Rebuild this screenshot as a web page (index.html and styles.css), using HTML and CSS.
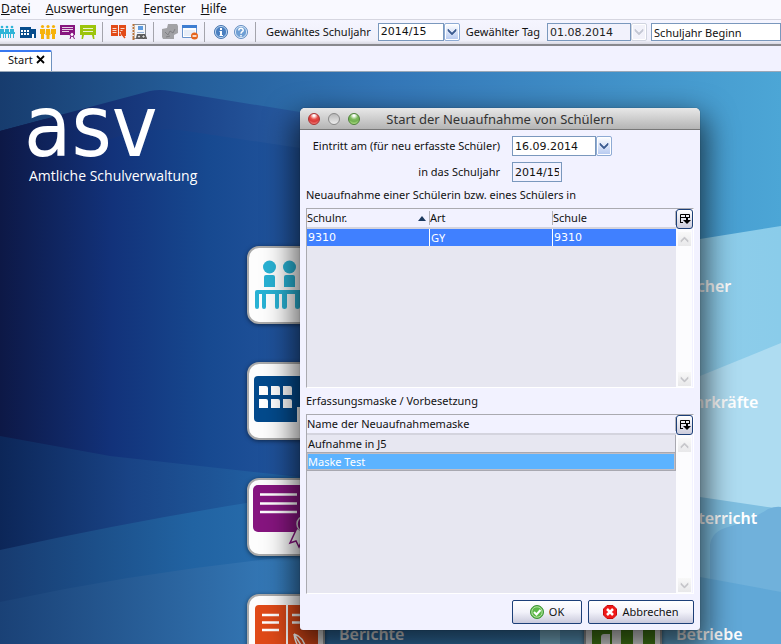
FILE: index.html
```html
<!DOCTYPE html>
<html lang="de">
<head>
<meta charset="utf-8">
<title>ASV</title>
<link rel="stylesheet" href="styles.css">
</head>
<body>
<svg class="defs" aria-hidden="true">
  <symbol id="chevron" viewBox="0 0 10 8"><path d="M1 1l4 4 4-4v2L5 7 1 3z" fill="currentColor" stroke="currentColor" stroke-width=".6"/></symbol>
  <symbol id="columns" viewBox="0 0 12 12"><path d="M1.500 10V1.500h9V5M1 4.500h10M6.500 1v4M1 9.500h3" fill="none" stroke="#000"/><path d="M7 5h2v2h3l-4 4-4-4h3z"/></symbol>
</svg>

<nav class="menubar">
  <a href="#"><u>D</u>atei</a><a href="#"><u>A</u>uswertungen</a><a href="#"><u>F</u>enster</a><a href="#"><u>H</u>ilfe</a>
</nav>

<div class="toolbar">
  <button class="tool" aria-label="Schüler"><svg viewBox="0 0 16 16"><g fill="#2fb4d8"><circle cx="2" cy="3" r="1.300"/><circle cx="7" cy="3" r="1.300"/><circle cx="12" cy="3" r="1.300"/><path d="M0 5h4v3H0zM5 5h4v3H5zM10 5h4v3h-4zM0 8h15v2H0zM0 10h1v4H0zM3 10h1v4H3zM5 10h1v4H5zM8 10h1v4H8zM10 10h1v4h-1zM13 10h1v4h-1z"/></g></svg></button>
  <button class="tool" aria-label="Klassen"><svg viewBox="0 0 16 16"><path d="M0 3h11v2h5v9H0z" fill="#064b8c"/><path d="M1 6h2v2H1zM4 6h2v2H4zM7 6h2v2H7zM1 9h2v2H1zM4 9h2v2H4zM7 9h2v2H7zM12 10h2v4h-2z" fill="#fff"/></svg></button>
  <button class="tool" aria-label="Lehrer"><svg viewBox="0 0 16 16"><g fill="#f6b20a"><circle cx="2.500" cy="2.500" r="1.600"/><circle cx="8" cy="2.500" r="1.600"/><circle cx="13.500" cy="2.500" r="1.600"/><path d="M0 5h5v5H4v5H1v-5H0zM6 5h4l.5 6H9.500v4h-3v-4h-1zM11 5h5v5h-1v5h-3v-5h-1z"/></g></svg></button>
  <button class="tool" aria-label="Zeugnisse"><svg viewBox="0 0 16 16"><path d="M0 1h15v10H0z" fill="#86157f"/><path d="M2 3.500h11M2 5.500h11M2 7.500h7" stroke="#fff" stroke-width=".8"/><circle cx="12" cy="10.500" r="2" fill="#fff" stroke="#86157f"/><path d="M11 12l-1 3M13 12l1.500 3" stroke="#86157f"/></svg></button>
  <button class="tool" aria-label="Unterricht"><svg viewBox="0 0 16 16"><path d="M0 1h16v10H0zM2 11h2l-1 4H1.500zM12 11h2l.5 4H13z" fill="#9cc40c"/><path d="M3 4.500h10M3 7.500h10" stroke="#fff" stroke-width=".8"/></svg></button>
  <span class="separator"></span>
  <button class="tool" aria-label="Berichte"><svg viewBox="0 0 16 16"><path d="M0 1h7v11H0zM8 1h7v11H8z" fill="#e24a18"/><path d="M1.500 4.500h4M1.500 6.500h4M1.500 8.500h4M9.500 4.500h4M9.500 6.500h2" stroke="#fff" stroke-width=".8"/><path d="M9 8l2 4 3 2" fill="none" stroke="#fff"/><path d="M10 9l4 5" stroke="#e24a18" stroke-width="1.500"/></svg></button>
  <button class="tool" aria-label="Adressbuch"><svg viewBox="0 0 16 16"><path d="M2.500.5h12v14h-12z" fill="#f4f7fb" stroke="#8a8f98"/><path d="M2.500 0v16" stroke="#b8743a" stroke-width="2"/><path d="M0 2.500h3M0 5.500h3M0 8.500h3M0 11.500h3" stroke="#e4e4e8"/><path d="M7 2h5v4H7z" fill="#5d9be0"/><path d="M6 8.500h7" stroke="#9ab4d8"/><path d="M5 14l1-4h8l2 4v1H5z" fill="#666"/><circle cx="8" cy="12.500" r="1.600" fill="#ddd" stroke="#333" stroke-width=".8"/><circle cx="12.500" cy="12.500" r="1.600" fill="#ddd" stroke="#333" stroke-width=".8"/></svg></button>
  <span class="separator"></span>
  <button class="tool" aria-label="Dokumente" disabled><svg viewBox="0 0 16 16"><path d="M6 0h9l1 2v7l-4 2v4H1l-1-2V5l5-1z" fill="#a2a2a6"/><path d="M3 8l3 3 2-4 3 2 2-4M4 13l4-1" fill="none" stroke="#808084"/></svg></button>
  <button class="tool" aria-label="Fenster schließen"><svg viewBox="0 0 16 16"><path d="M.5 1.500h14v12H.5z" fill="#fff" stroke="#6a94cc"/><path d="M0 1h15v3H0z" fill="#3f7ed2"/><path d="M2 6h11v6H2z" fill="#e8eef8"/><circle cx="12.500" cy="12" r="3.500" fill="#e5641c"/><path d="M10.500 12h4" stroke="#fff" stroke-width="1.500"/></svg></button>
  <span class="separator"></span>
  <button class="tool" aria-label="Info"><svg viewBox="0 0 16 16"><circle cx="8" cy="8" r="6.500" fill="#4a7fc0" stroke="#4a78b0"/><circle cx="8" cy="8" r="5.600" fill="none" stroke="#b5d0ee"/><path d="M7 4h2v2H7zM6.500 7H9v4h1v1H6.500v-1H7V8h-.5z" fill="#fff"/></svg></button>
  <button class="tool" aria-label="Hilfe"><svg viewBox="0 0 16 16"><circle cx="8" cy="8" r="6.500" fill="#6f9fd4" stroke="#6a92c4"/><circle cx="8" cy="8" r="5.600" fill="none" stroke="#d4e4f6"/><path d="M5.800 6.500c0-3 4.600-2.800 4.400-.2C10 7.800 8 7.700 8 9.800M8 11v1.600" fill="none" stroke="#fff" stroke-width="1.500"/></svg></button>
  <span class="separator"></span>
  <label class="toolbar-label" for="year">Gewähltes Schuljahr</label>
  <div class="combo combo-year">
    <select id="year" class="num"><option>2014/15</option></select>
    <span class="drop"><svg><use href="#chevron"/></svg></span>
  </div>
  <label class="toolbar-label" for="day">Gewählter Tag</label>
  <div class="combo combo-date">
    <input id="day" class="num" type="text" value="01.08.2014" disabled>
    <button class="drop" aria-label="Kalender" disabled><svg><use href="#chevron"/></svg></button>
  </div>
  <input class="day-name" type="text" value="Schuljahr Beginn" aria-label="Bezeichnung des Tages">
</div>

<div class="tabs"><div class="tab"><span>Start</span><button aria-label="Schließen"><svg viewBox="0 0 9 9"><path d="M1 1l7 7M8 1L1 8" stroke="#000" stroke-width="1.800"/></svg></button></div></div>

<main class="desktop">
  <svg class="backdrop" viewBox="0 0 781 572" preserveAspectRatio="xMinYMin slice" aria-hidden="true">
    <defs>
      <linearGradient id="sky"><stop offset="0" stop-color="#173c6e"/><stop offset=".25" stop-color="#255f9b"/><stop offset=".5" stop-color="#3477b8"/><stop offset="1" stop-color="#4ca6d6"/></linearGradient>
      <linearGradient id="hill" gradientUnits="userSpaceOnUse" x1="0" y1="0" x2="320" y2="0"><stop offset="0" stop-color="#0e1745"/><stop offset=".3" stop-color="#142f72"/><stop offset=".6" stop-color="#1b448a"/><stop offset="1" stop-color="#2b60a6"/></linearGradient>
      <linearGradient id="front" gradientUnits="userSpaceOnUse" x1="0" y1="0" x2="320" y2="0"><stop offset="0" stop-color="#0d1846"/><stop offset=".35" stop-color="#12327a"/><stop offset=".65" stop-color="#174990"/><stop offset="1" stop-color="#2457a0"/></linearGradient>
      <linearGradient id="low1" gradientUnits="userSpaceOnUse" x1="0" y1="0" x2="320" y2="0"><stop offset="0" stop-color="#0c2658"/><stop offset=".4" stop-color="#194385"/><stop offset="1" stop-color="#246bad"/></linearGradient>
      <linearGradient id="low2" gradientUnits="userSpaceOnUse" x1="0" y1="0" x2="320" y2="0"><stop offset="0" stop-color="#173b70"/><stop offset=".6" stop-color="#2163a2"/><stop offset="1" stop-color="#2c72b3"/></linearGradient>
      <linearGradient id="low3" gradientUnits="userSpaceOnUse" x1="0" y1="0" x2="781" y2="0"><stop offset="0" stop-color="#1a4176"/><stop offset=".35" stop-color="#3478b6"/><stop offset="1" stop-color="#438fc6"/></linearGradient>
      <linearGradient id="ice" gradientUnits="userSpaceOnUse" x1="690" y1="0" x2="781" y2="0"><stop offset="0" stop-color="#8fcdea"/><stop offset="1" stop-color="#8accea"/></linearGradient>
    </defs>
    <path fill="url(#sky)" d="M0 0h781v572H0z"/>
    <path fill="url(#hill)" d="M0 59L60 43 150 19q10-2 20 0L300 40l130 30v502H0z"/>
    <path fill="url(#front)" d="M0 59l45-12 60 22q35-14 75-11l120 18 130 22v474H0z"/>
    <path fill="url(#low1)" d="M0 364l110 20 190 21 100 10v157H0z"/>
    <path fill="url(#low2)" d="M0 478q160-35 300-55l160-16v165H0z"/>
    <path fill="url(#low3)" d="M0 530q150-32 300-46l400-24v112H0z"/>
    <path fill="url(#ice)" d="M540 190l160-23 81-13v418H540z"/>
    <path fill="#aedcf1" d="M560 370l140-66 81-33v166l-221-25z"/>
    <path fill="#7fbfe1" d="M560 406l140 19 81 12v135H560z"/>
    <path fill="#70b1db" d="M710 572V473q2-14 18-18 22-6 40-18 8-3 13-2v137z"/>
    <path fill="#51a0d3" opacity=".5" d="M560 495l140 10 81 15v52H560z"/>
  </svg>

  <div class="welcome">
    <header class="brand"><div class="logo">asv</div><p>Amtliche Schulverwaltung</p></header>
    <div class="tiles">
      <a class="tile" href="#" aria-label="Schüler"><svg viewBox="0 0 78 78"><rect class="card" x="1" y="1" width="76" height="76" rx="11"/><g fill="#29b2d4"><circle cx="22.500" cy="21" r="6.500"/><circle cx="42.500" cy="21" r="6.500"/><path d="M17 41V31q0-2 2-2h7q2 0 2 2v10zM37 41V31q0-2 2-2h7q2 0 2 2v10zM8 46q0-2 2-2h60v4H12v13q0 2-2 2t-2-2zM15 47h4v14q0 2-2 2t-2-2zM28 47h4v14q0 2-2 2t-2-2zM35 47h5v14q0 2-2.500 2T35 61zM48 47h5v14q0 2-2.500 2T48 61z"/></g></svg></a>
      <a class="tile" href="#"><svg viewBox="0 0 78 78"><rect class="card" x="1" y="1" width="76" height="76" rx="11"/></svg><span>Bücher</span></a>
      <a class="tile" href="#" aria-label="Klassen"><svg viewBox="0 0 78 78"><rect class="card" x="1" y="1" width="76" height="76" rx="11"/><rect x="7" y="14" width="64" height="46" rx="4" fill="#034a8c"/><path fill="#fff" d="M12 24h7q2 0 2 2v7h-9zM24 24h7q2 0 2 2v7h-9zM36 24h7q2 0 2 2v7h-9zM12 37h7q2 0 2 2v7h-9zM24 37h7q2 0 2 2v7h-9zM36 37h7q2 0 2 2v7h-9zM50 45h16v16H50z"/></svg></a>
      <a class="tile" href="#"><svg viewBox="0 0 78 78"><rect class="card" x="1" y="1" width="76" height="76" rx="11"/></svg><span>Lehrkräfte</span></a>
      <a class="tile" href="#" aria-label="Zeugnisse"><svg viewBox="0 0 78 78"><rect class="card" x="1" y="1" width="76" height="76" rx="11"/><rect x="6" y="7" width="66" height="47" rx="5" fill="#86157f"/><path d="M13 16.500h37M13 25.500h37M13 34h37" stroke="#fff" stroke-width="2.500"/><path d="M50 50l-7 15 6-2 3 6 6-14z" fill="#fff" stroke="#86157f" stroke-width="1.500"/><circle cx="58" cy="46" r="8" fill="#86157f" stroke="#ddd" stroke-width="1.500"/></svg></a>
      <a class="tile" href="#"><svg viewBox="0 0 78 78"><rect class="card" x="1" y="1" width="76" height="76" rx="11"/></svg><span>Unterricht</span></a>
      <a class="tile" href="#"><svg viewBox="0 0 78 78"><rect class="card" x="1" y="1" width="76" height="76" rx="11"/><path d="M12 11h27v52H8V15q0-4 4-4zM41 11h26q4 0 4 4v48H41z" fill="#e04a18"/><path d="M15 21h17M15 28.500h17M15 36h17M45 21h17M45 28.500h17" stroke="#fff" stroke-width="2.500"/><path d="M47 40q2 14 11 19l4 6M47 40q11 3 12 18M47 40l12 19" fill="none" stroke="#fff" stroke-width="1.500"/></svg><span>Berichte</span></a>
      <a class="tile" href="#"><svg viewBox="0 0 78 78"><rect class="card" x="1" y="1" width="76" height="76" rx="11"/><path d="M8 20h20v46H8zM37 20h12v46H37zM59 20h12v46H59z" fill="#4c8c18"/><path d="M17 64V43q0-3 3-3h6v24z" fill="#fff"/></svg><span>Betriebe</span></a>
    </div>
  </div>

  <section class="dialog" role="dialog" aria-labelledby="dialog-title">
    <header class="titlebar">
      <div class="lights"><button class="light red" aria-label="Schließen"></button><button class="light gray" aria-label="Minimieren"></button><button class="light green" aria-label="Zoomen"></button></div>
      <h1 id="dialog-title">Start der Neuaufnahme von Schülern</h1>
    </header>
    <form class="content">
      <div class="fields">
        <label for="entry">Eintritt am (für neu erfasste Schüler)</label>
        <div class="combo combo-date"><input id="entry" class="num" type="text" value="16.09.2014"><button type="button" class="drop" aria-label="Kalender"><svg><use href="#chevron"/></svg></button></div>
        <label for="entry-year">in das Schuljahr</label>
        <input id="entry-year" class="num short" type="text" value="2014/15" readonly>
      </div>
      <h2>Neuaufnahme einer Schülerin bzw. eines Schülers in</h2>
      <div class="pane">
        <table>
          <thead><tr><th><div class="head"><span>Schulnr.</span><svg class="sort" viewBox="0 0 8 5"><path d="M4 0l4 5H0z" fill="#1d3a5e"/></svg></div></th><th><div class="head">Art</div></th><th><div class="head">Schule</div></th></tr></thead>
          <tbody><tr class="picked"><td class="num">9310</td><td>GY</td><td class="num">9310</td></tr></tbody>
        </table>
        <div class="side"><button type="button" class="columns" aria-label="Spalten"><svg><use href="#columns"/></svg></button>
          <div class="scroll"><button type="button" class="up" aria-label="Nach oben" disabled><svg><use href="#chevron"/></svg></button><button type="button" aria-label="Nach unten" disabled><svg><use href="#chevron"/></svg></button></div></div>
      </div>
      <h2>Erfassungsmaske / Vorbesetzung</h2>
      <div class="pane">
        <table class="masks">
          <thead><tr><th><div class="head">Name der Neuaufnahmemaske</div></th></tr></thead>
          <tbody><tr><td>Aufnahme in J5</td></tr><tr class="focused"><td>Maske Test</td></tr></tbody>
        </table>
        <div class="side"><button type="button" class="columns" aria-label="Spalten"><svg><use href="#columns"/></svg></button>
          <div class="scroll"><button type="button" class="up" aria-label="Nach oben" disabled><svg><use href="#chevron"/></svg></button><button type="button" aria-label="Nach unten" disabled><svg><use href="#chevron"/></svg></button></div></div>
      </div>
      <footer class="actions">
        <button type="button" class="action ok"><svg viewBox="0 0 14 14"><circle cx="7" cy="7" r="6.500" fill="#5cb848" stroke="#3d9436"/><circle cx="7" cy="7" r="5.200" fill="none" stroke="#b4e0a4"/><path d="M4 7l2.500 2.500L10.500 5" fill="none" stroke="#fff" stroke-width="2"/></svg>OK</button>
        <button type="button" class="action cancel"><svg viewBox="0 0 14 14"><path d="M4 .5h6L13.500 4v6L10 13.500H4L.5 10V4z" fill="#f01818" stroke="#c80c0c"/><path d="M4 4l6 6M10 4l-6 6" stroke="#fff" stroke-width="2.500"/></svg>Abbrechen</button>
      </footer>
    </form>
  </section>
</main>
</body>
</html>
```
FILE: styles.css
```css
* { box-sizing: border-box; }
body {
  margin: 0;
  height: 100vh;
  display: flex;
  flex-direction: column;
  overflow: hidden;
  background: #f2f2ff;
  color: #111;
  font: 11px/16px "Noto Sans", "Open Sans", sans-serif;
}
button, input, select { font: inherit; color: inherit; margin: 0; }
button { padding: 0; border: 0; background: none; }
a { color: inherit; text-decoration: none; }
.defs { position: absolute; width: 0; height: 0; }
.num { font-family: "DejaVu Sans", sans-serif; }

.menubar {
  flex: none;
  display: flex;
  gap: 15px;
  height: 20px;
  padding-left: 1px;
  border-bottom: 1px solid #d6d6e0;
  background: #f9f9ff;
  font-size: 12px;
  line-height: 18px;
}

.toolbar {
  flex: none;
  display: flex;
  align-items: center;
  gap: 4px;
  height: 26px;
  border-bottom: 2px solid #88888e;
  background: linear-gradient(#f5f5ff, #f0f0fa 85%, #d8d8e2);
  white-space: nowrap;
}
.tool { flex: none; width: 16px; height: 16px; }
.tool svg { display: block; width: 16px; height: 16px; }
.separator { flex: none; width: 1px; height: 20px; margin: 0 4px 0 2px; background: #a4a4ac; }
.toolbar-label { margin: 0 3px 0 2px; }
.day-name { flex: 1 0 130px; }

input, select {
  height: 20px;
  min-width: 0;
  padding: 0 2px;
  border: 1px solid #7a98bd;
  border-radius: 0;
  background: #fff;
}
.toolbar input, .toolbar select { height: 18px; }
select { appearance: none; }
input:disabled { background: #f2f2fc; color: #222; }
.combo { flex: none; display: flex; }
.combo > :first-child { flex: 1; }
.combo-year { width: 82px; }
.combo-date { width: 100px; }
.drop {
  display: flex;
  align-items: center;
  justify-content: center;
  width: 16px;
  border: 1px solid #8eabd4;
  border-radius: 2px;
  background: linear-gradient(#fff, #b4c8f0);
  box-shadow: inset 0 0 0 1px #fff;
  color: #3c5c90;
}
.drop:disabled { border-color: #d0d4e0; background: #f2f2fa; color: #c4c8d4; }
.drop svg { width: 10px; height: 8px; }

.tabs { flex: none; display: flex; align-items: end; height: 25px; }
.tab {
  display: flex;
  align-items: center;
  gap: 3px;
  height: 21px;
  padding: 0 6px 4px 8px;
  border-top: 2px solid #3878f0;
  border-right: 1px solid #6e92c0;
  border-top-right-radius: 2px;
  background: #fff;
}
.tab svg { display: block; width: 9px; height: 9px; }

.desktop { position: relative; flex: 1; min-height: 0; overflow: hidden; border-top: 1px solid #9aa8b8; }
.backdrop { position: absolute; inset: 0; width: 100%; height: 100%; }
.welcome { position: relative; }
.brand { height: 174px; padding: 14px 0 0 24px; color: #fff; }
.logo { height: 80px; font: 86px/80px "DejaVu Sans Condensed", "Roboto", sans-serif; }
.brand p { margin: 0; padding-left: 5px; font: 14px/20px "Open Sans", sans-serif; }
.tiles {
  display: grid;
  grid-template-columns: 337px 1fr;
  row-gap: 38px;
  padding-left: 247px;
}
.tile {
  display: flex;
  align-items: center;
  gap: 14px;
  height: 78px;
  color: #fff;
  font-size: 16px;
  line-height: 24px;
  font-weight: 600;
  white-space: nowrap;
}
.tile span { padding-top: 2px; }
.tile svg { flex: none; width: 78px; height: 78px; filter: drop-shadow(0 1px 2px rgba(0, 0, 0, .5)); }
.card { fill: #fdfdfd; stroke: #aaa; stroke-width: 2; }

.dialog {
  position: absolute;
  top: 36px;
  left: 300px;
  width: 400px;
  border-radius: 5px 5px 3px 3px;
  background: #f2f2ff;
  box-shadow: 0 0 1px rgba(0, 0, 0, .6), 0 14px 30px 6px rgba(0, 0, 0, .65);
}
.titlebar {
  display: grid;
  grid-template-columns: 60px 1fr 60px;
  align-items: center;
  height: 22px;
  border-bottom: 1px solid #777;
  border-radius: 5px 5px 0 0;
  background: linear-gradient(#e8e8e8, #b4b4b4);
}
.titlebar h1 { margin: 0; color: #333; font-size: 13px; line-height: 20px; font-weight: 400; text-align: center; white-space: nowrap; }
.lights { display: flex; gap: 8px; padding-left: 8px; }
.light { width: 12px; height: 12px; border: 1px solid #888; border-radius: 50%; }
.red { border-color: #a83030; background: radial-gradient(circle at 50% 15%, #fff 8%, #e85048 40%, #d83838 60%, #ffa098); }
.gray { background: linear-gradient(#b8b8b8, #ececec); }
.green { border-color: #4c8038; background: radial-gradient(circle at 50% 15%, #fff 8%, #80bc60 40%, #70b050 60%, #d0f8a0); }

.content { padding: 6px; }
.fields {
  display: grid;
  grid-template-columns: 194px 1fr;
  gap: 6px 12px;
  align-items: center;
}
.fields label { text-align: right; white-space: nowrap; }
.short { width: 50px; background: #f2f2ff; }
h2 { margin: 0; font-size: 11px; line-height: 26px; font-weight: 400; }

.pane {
  display: grid;
  grid-template-columns: 1fr 17px;
  align-items: start;
  height: 180px;
  border: 1px solid #aaaab0;
  border-right-color: #fff;
  border-bottom-color: #fff;
  background: #e7e7f1;
}
table { width: 100%; table-layout: fixed; border-collapse: separate; border-spacing: 0; }
th, td { padding: 0; font-weight: 400; text-align: left; }
th { height: 20px; border-bottom: 2px solid #d4d4de; background: #f2f2ff; }
.head {
  display: flex;
  align-items: center;
  justify-content: space-between;
  height: 14px;
  padding: 0 3px 0 0;
  border-right: 1px solid #b4b4ba;
}
.sort { width: 8px; height: 5px; }
td { height: 17px; padding-left: 1px; line-height: 16px; }
.picked td { background: #4080ff; color: #fff; border-right: 1px solid #fff; }
.picked td:last-child { border-right: 0; }
.masks td { height: 18px; border-right: 1px solid #a8a8b0; border-bottom: 1px solid #a8a8b0; }
.focused td { background: #5cb3ff; color: #fff; box-shadow: inset 0 0 0 1px #c2bec4; }

.side { align-self: stretch; display: flex; flex-direction: column; background: #f2f2ff; }
.columns {
  display: flex;
  align-items: center;
  justify-content: center;
  width: 17px;
  height: 20px;
  border: 1px solid #1c3f78;
  border-radius: 3px;
  background: linear-gradient(#fff, #ccccdc);
}
.columns svg { width: 12px; height: 12px; }
.scroll {
  flex: 1;
  display: flex;
  flex-direction: column;
  justify-content: space-between;
  align-items: center;
  width: 16px;
  padding: 3px 0 1px;
  background: #fcfcfe;
}
.scroll button {
  display: flex;
  align-items: center;
  justify-content: center;
  width: 13px;
  height: 14px;
  background: linear-gradient(#f8f8f8, #e8e8ea);
  color: #c4c4c8;
}
.scroll svg { width: 9px; height: 7px; }
.up svg { transform: rotate(180deg); }

.actions { display: flex; justify-content: flex-end; gap: 6px; margin-top: 6px; }
.action {
  display: flex;
  align-items: center;
  justify-content: center;
  gap: 5px;
  height: 24px;
  border: 1px solid #1c3f78;
  border-radius: 2px;
  background: linear-gradient(#fff, #f2f2fa 50%, #cacadc);
}
.action svg { width: 14px; height: 14px; }
.ok { width: 70px; }
.cancel { width: 106px; }
```
